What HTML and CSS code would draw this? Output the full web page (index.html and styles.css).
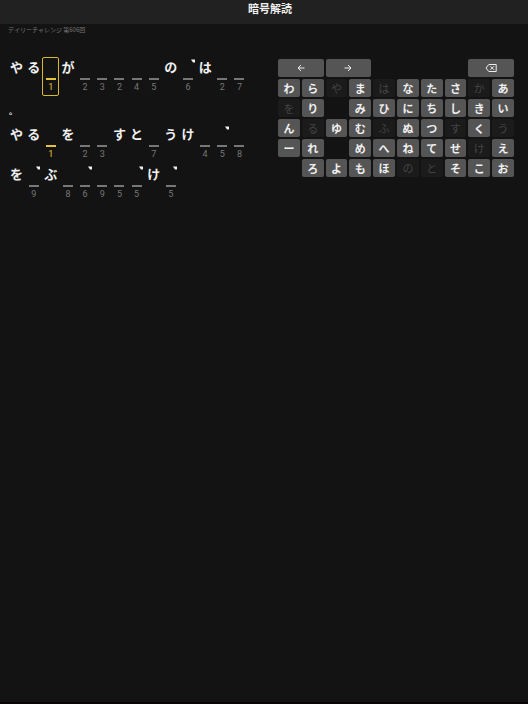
FILE: index.html
```html
<!DOCTYPE html>
<html lang="ja">
<head>
<meta charset="utf-8">
<meta name="viewport" content="width=device-width, initial-scale=1">
<title>暗号解読</title>
<link rel="stylesheet" href="styles.css">
</head>
<body>
<header class="topbar"><h1>暗号解読</h1></header>
<main class="game">
  <p class="subtitle">デイリーチャレンジ 第606回</p>
  <div class="columns">
    <section class="board" id="board" aria-label="問題"></section>
    <section class="keyboard" id="keyboard" aria-label="キーボード">
      <button class="key wide" type="button" aria-label="前へ"><svg viewBox="0 0 12 12"><path d="M9.5 6H3M6 3 3 6 6 9"/></svg></button>
      <button class="key wide" type="button" aria-label="次へ"><svg viewBox="0 0 12 12"><path d="M2.5 6H9M6 3 9 6 6 9"/></svg></button>
      <button class="key wide erase" type="button" aria-label="削除"><svg viewBox="0 0 12 12"><path d="M3.8 2.5h7.4v7H3.8L1 6zM5.4 4.2 9 7.8M9 4.2 5.4 7.8"/></svg></button>
    </section>
  </div>
</main>
<script src="script.js"></script>
</body>
</html>
```
FILE: styles.css
```css
* {
  box-sizing: border-box;
}

body {
  margin: 0;
  min-height: 100vh;
  background: #131313;
  color: #f0f0f0;
  font-family: "Noto Sans CJK JP", sans-serif;
  border-bottom: 2px solid #080406;
}

.topbar {
  height: 24px;
  padding-left: 12px;
  background: #212121;
  text-align: center;
}

h1 {
  margin: 0;
  font-size: 11px;
  line-height: 16px;
  font-weight: 700;
}

.game {
  padding: 0 8px;
}

.subtitle {
  margin: 0;
  font-size: 6px;
  line-height: 12px;
  color: #777;
}

.columns {
  display: grid;
  grid-template-columns: 240px 1fr;
  gap: 30px;
  padding: 21px 6px 0 0;
}

.board {
  display: grid;
  gap: 1px;
  align-content: start;
}

.line {
  display: grid;
  grid-template-columns: repeat(14, 1fr);
}

.cell {
  position: relative;
  display: flex;
  flex-direction: column;
  align-items: center;
  height: 39px;
  padding-top: 1px;
  border: 1px solid transparent;
  border-radius: 2px;
  color: #777;
}

.letter {
  height: 19px;
  font-size: 13px;
  line-height: 16px;
  font-weight: 700;
  color: #f0f0f0;
}

.stop {
  height: 26px;
  align-items: flex-start;
}

.stop .letter {
  font-size: 8px;
  line-height: 24px;
}

.slot {
  width: 10px;
  border-top: 2px solid #777;
}

.number {
  font-family: Roboto, sans-serif;
  font-size: 9px;
  line-height: 14px;
}

.linked {
  color: #e6c13a;
}

.linked .slot {
  border-color: #e6c13a;
}

.selected {
  border-color: #d8b92f;
}

.mark {
  position: absolute;
  top: 1px;
  right: 0;
  width: 5px;
  height: 5px;
  fill: #f0f0f0;
}

.keyboard {
  display: grid;
  grid-template-columns: repeat(10, 1fr);
  grid-auto-rows: 18px;
  gap: 2px;
  align-content: start;
  padding-top: 2px;
}

.key {
  display: flex;
  align-items: center;
  justify-content: center;
  min-width: 0;
  padding: 0;
  border: 0;
  border-radius: 2px;
  background: #555;
  color: #f0f0f0;
  font: 700 11px/18px "Noto Sans CJK JP", sans-serif;
}

.key:disabled {
  background: #1b1b1b;
  color: #444;
  font-weight: 400;
}

.wide {
  grid-column: span 2;
}

.erase {
  grid-column: 9 / span 2;
}

.key svg {
  width: 12px;
  height: 12px;
  fill: none;
  stroke: #eee;
  stroke-width: 1;
}
```
FILE: script.js
```js
// A digit is an empty slot, "*" adds a voiced mark, other characters are given.
const lines = [
  "やる1が23245の6*は27",
  "。",
  "やる1を23すと7うけ45*8",
  "を9*ぶ86*955*け5*"
];
const board = document.getElementById("board");
lines.forEach((text, lineIndex) => {
  const line = document.createElement("div");
  line.className = "line";
  for (const [token] of text.matchAll(/.\*?/g)) {
    const cell = document.createElement("div");
    cell.className = "cell";
    if (text === "。") cell.classList.add("stop");
    const blank = /\d/.test(token[0]);
    cell.innerHTML = `<span class="letter">${blank ? "" : token[0]}</span>`;
    if (blank) {
      cell.innerHTML += `<span class="slot"></span><span class="number">${token[0]}</span>`;
      if (token[0] === "1") {
        cell.classList.add("linked");
        if (lineIndex === 0) cell.classList.add("selected");
      }
    }
    if (token[1]) {
      cell.innerHTML += '<svg class="mark" viewBox="0 0 5 5"><path d="M0 .5h4v3H2z"/></svg>';
    }
    line.append(cell);
  }
  board.append(line);
});

const rows = [
  "わらやまはなたさかあ",
  "をり みひにちしきい",
  "んるゆむふぬつすくう",
  "ーれ めへねてせけえ",
  " ろよもほのとそこお"
];
const used = "やはかをるふすうけのと";
const keyboard = document.getElementById("keyboard");
for (const kana of rows.join("")) {
  const key = document.createElement(kana === " " ? "span" : "button");
  if (kana !== " ") {
    key.type = "button";
    key.className = "key";
    key.textContent = kana;
    key.disabled = used.includes(kana);
  }
  keyboard.append(key);
}
```
